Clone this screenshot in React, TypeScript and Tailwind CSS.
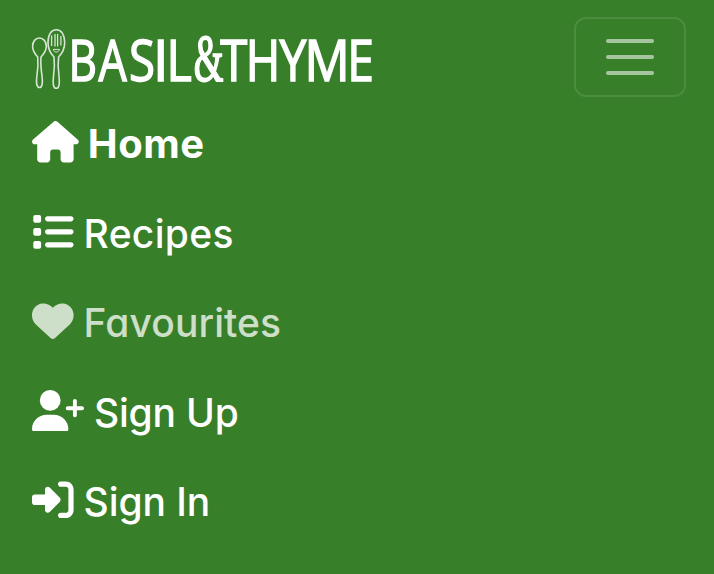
import type { ReactNode } from "react";
import { FaHouse, FaList, FaHeart, FaUserPlus, FaRightToBracket } from "react-icons/fa6";

type Glyph = { char: string; x: number; scale: number };

const wordmark: Glyph[] = [
  { char: "B", x: 68.6, scale: 0.79 },
  { char: "A", x: 98.4, scale: 0.8 },
  { char: "S", x: 129, scale: 0.85 },
  { char: "I", x: 153, scale: 1 },
  { char: "L", x: 166.5, scale: 0.87 },
  { char: "T", x: 220.3, scale: 0.88 },
  { char: "H", x: 245.8, scale: 0.84 },
  { char: "Y", x: 279.4, scale: 0.86 },
  { char: "M", x: 304.6, scale: 0.9 },
  { char: "E", x: 347.2, scale: 0.86 },
];

function Logo() {
  return (
    <svg width="342" height="64" viewBox="32 27 342 64" className="block overflow-visible" aria-label="Basil & Thyme">
      <g fill="none" stroke="#fff" strokeOpacity="0.8" strokeWidth="1.6" strokeLinejoin="round">
        <path d="M37.7 57C35 54 32.6 50.5 32.6 46.5C32.6 41.5 35.5 38 39.4 38C43.4 38 46.3 41.5 46.3 46.5C46.3 50.5 43.7 54 41 57C40.4 64 41 69 42 76C42.8 82 42.5 87.5 39.5 87.5C36.4 87.5 36 82 36.9 76C38 69 38.4 64 37.7 57Z" />
        <path d="M54 57C50.5 53.5 48 48.5 48 42.5C48 34.5 51.3 29.7 56.3 29.7C61.3 29.7 64.7 34.5 64.7 42.5C64.7 48.5 62 53.5 58.6 57C57.7 64 58 69 59 76C59.8 83 59.4 88.3 56.3 88.3C53 88.3 52.7 83 53.5 76C54.6 69 54.8 64 54 57Z" />
        <path d="M51.6 35.5V46M55 34V46.5M57.6 34V46.5M60.9 36V45.5" strokeWidth="1.3" />
        <path d="M53.3 49.4H59.4C59 51.4 57.8 52 56.4 52C55 52 53.8 51.4 53.3 49.4Z" strokeWidth="1" />
      </g>
      <g fill="#fff" stroke="#fff" strokeWidth="1.5" fontFamily="'Open Sans', sans-serif" fontSize="55.8">
        {wordmark.map((g) => (
          <text key={g.char} transform={`translate(${g.x} 80.6) scale(${g.scale} 1)`}>
            {g.char}
          </text>
        ))}
        <text
          transform="translate(193.8 81.4) scale(.57 1)"
          fontFamily="'Liberation Serif', serif"
          fontSize="67"
          strokeWidth="1.8"
        >
          &amp;
        </text>
      </g>
    </svg>
  );
}

function NavItem({ icon, className, children }: { icon: ReactNode; className: string; children: ReactNode }) {
  return (
    <li className="flex h-[89.5px] items-start">
      <a className="flex items-center leading-[60px]" href="#">
        {icon}
        <span className={className}>{children}</span>
      </a>
    </li>
  );
}

export default function App() {
  return (
    <nav className="h-[574px] w-[714px] overflow-hidden bg-[#387f29] pt-[17px] pr-7 pl-8 font-['Inter',sans-serif] text-[39px] text-white">
      <div className="flex h-20 items-start justify-between">
        <div className="pt-2.5">
          <Logo />
        </div>
        <button
          aria-label="Toggle navigation"
          className="flex h-20 w-28 flex-col items-center justify-center gap-3 rounded-xl border-2 border-white/10"
        >
          <span className="h-1 w-12 rounded-full bg-white/55" />
          <span className="h-1 w-12 rounded-full bg-white/55" />
          <span className="h-1 w-12 rounded-full bg-white/55" />
        </button>
      </div>
      <ul className="pt-[17px]">
        <NavItem icon={<FaHouse className="-mt-1 h-[41.6px] w-[46.8px]" />} className="ml-[9px] font-bold text-[40px] tracking-[0.5px]">
          Home
        </NavItem>
        <NavItem icon={<FaList className="-mt-1 size-[41.6px]" />} className="ml-2.5 font-medium tracking-[0.3px]">
          Recipes
        </NavItem>
        <NavItem
          icon={<FaHeart className="-mt-[5px] size-[41.6px] opacity-75" />}
          className="ml-2.5 font-medium tracking-[0.1px] opacity-75 [font-feature-settings:'cv11']"
        >
          Favourites
        </NavItem>
        <NavItem icon={<FaUserPlus className="-mt-1 h-[41.6px] w-[52px]" />} className="ml-2.5 font-medium tracking-[-0.2px]">
          Sign Up
        </NavItem>
        <NavItem icon={<FaRightToBracket className="-mt-[5px] size-[41.6px]" />} className="ml-2.5 font-medium tracking-[-0.1px]">
          Sign In
        </NavItem>
      </ul>
    </nav>
  );
}
